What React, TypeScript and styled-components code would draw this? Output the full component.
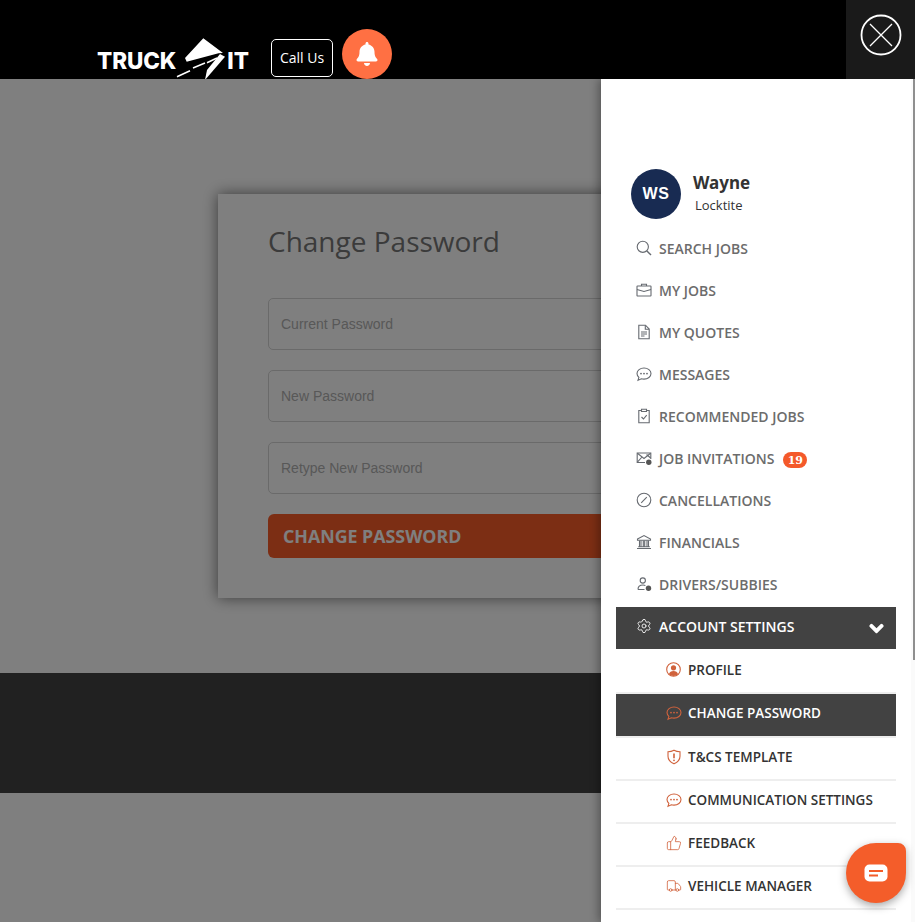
import React from "react";
import styled, { createGlobalStyle } from "styled-components";
import { Settings, ThumbsUp, Truck } from "lucide-react";
import { FaBell, FaChevronDown } from "react-icons/fa";

const Global = createGlobalStyle`
  html, body { margin: 0; padding: 0; height: 100%; overflow: hidden; background: #fff; }
  body { font-family: "Open Sans", "Noto Sans", sans-serif; }
  * { box-sizing: border-box; }
`;

const Page = styled.div`
  position: relative;
  width: 915px;
  height: 922px;
  overflow: hidden;
`;

const Header = styled.header`
  position: relative;
  z-index: 5;
  height: 79px;
  background: #000;
  display: flex;
  align-items: flex-end;
  padding-left: 97px;
`;

const Logo = styled.div`
  display: flex;
  align-items: flex-start;
  width: 151px;
  height: 43px;
  color: #fff;
  font-family: "Inter", sans-serif;
  font-weight: 800;
  font-size: 22.5px;
  line-height: 28px;
  white-space: nowrap;
`;

const LogoWord = styled.span`
  padding-top: 11px;
  letter-spacing: -0.1px;
`;

const LogoMark = styled.svg`
  flex: none;
  margin: 0 0 0 -1px;
`;

const CallUs = styled.button`
  width: 62px;
  height: 38px;
  margin: 0 9px 2px 23px;
  padding: 0 0 2px;
  background: #000;
  color: #fff;
  border: 1px solid #fff;
  border-radius: 5px;
  font-family: "Open Sans", sans-serif;
  font-size: 14px;
`;

const BellButton = styled.div`
  width: 50px;
  height: 50px;
  border-radius: 50%;
  background: #ff7043;
  color: #fff;
  display: flex;
  align-items: center;
  justify-content: center;
`;

const CloseTile = styled.div`
  margin-left: auto;
  width: 69px;
  height: 79px;
  background: #1a1a1a;
  display: flex;
  justify-content: center;
  padding-top: 14px;
`;

const Main = styled.main`
  height: 594px;
  padding: 115px 0 0 218px;
  background: #fff;
`;

const Card = styled.section`
  width: 479px;
  height: 404px;
  padding: 28px 50px 0;
  background: #fff;
  box-shadow: 0 0 14px rgba(0, 0, 0, 0.55);
`;

const Title = styled.h1`
  margin: 0 0 37px;
  height: 39px;
  font-size: 28px;
  line-height: 39px;
  font-weight: 400;
  color: #767676;
`;

const Field = styled.input`
  display: block;
  width: 100%;
  height: 52px;
  margin-bottom: 20px;
  padding: 0 12px;
  border: 1px solid #d4d4d4;
  border-radius: 5px;
  background: #fff;
  font-family: "Liberation Sans", Arial, sans-serif;
  font-size: 14px;
  &::placeholder {
    color: #b0b0b0;
    opacity: 1;
  }
`;

const Submit = styled.button`
  display: block;
  width: 100%;
  height: 44px;
  padding: 0 15px;
  border: 0;
  border-radius: 6px;
  background: #f95c29;
  color: #fff;
  text-align: left;
  font-family: "Open Sans", sans-serif;
  font-weight: 700;
  font-size: 17.8px;
`;

const Footer = styled.footer`
  height: 120px;
  background: #424242;
`;

const Scrim = styled.div`
  position: absolute;
  left: 0;
  right: 0;
  top: 79px;
  bottom: 0;
  background: rgba(0, 0, 0, 0.5);
  z-index: 2;
`;

const Drawer = styled.aside`
  position: absolute;
  z-index: 3;
  top: 79px;
  right: 0;
  bottom: 0;
  width: 314px;
  padding: 90px 19px 0 15px;
  background: #fff;
  box-shadow: -3px 0 8px rgba(0, 0, 0, 0.3);
  overflow: hidden;
`;

const ScrollTrack = styled.div`
  position: absolute;
  top: 0;
  right: 0;
  bottom: 0;
  width: 4px;
  background: #fafafa;
`;

const ScrollThumb = styled.div`
  margin-left: 2px;
  width: 2px;
  height: 581px;
  background: #8f8f8f;
`;

const Profile = styled.div`
  display: flex;
  align-items: flex-start;
  height: 60px;
  padding-left: 15px;
`;

const Avatar = styled.div`
  width: 50px;
  height: 50px;
  flex: none;
  border-radius: 50%;
  background: #182b52;
  color: #fff;
  display: flex;
  align-items: center;
  justify-content: center;
  font-family: "Liberation Sans", Arial, sans-serif;
  font-weight: 700;
  font-size: 16px;
  letter-spacing: 0.5px;
`;

const ProfileText = styled.div`
  margin-left: 12px;
  display: flex;
  flex-direction: column;
`;

const ProfileName = styled.div`
  font-family: "Noto Sans", sans-serif;
  font-weight: 700;
  font-size: 17px;
  line-height: 28px;
  color: #333;
`;

const ProfileCompany = styled.div`
  margin: 0 0 0 2px;
  font-size: 13px;
  line-height: 16px;
  color: #333;
`;

const NavRow = styled.div<{ $active?: boolean }>`
  display: flex;
  align-items: center;
  height: 42px;
  padding: 0 12px 4px 20px;
  gap: 7px;
  background: ${(p) => (p.$active ? "#424242" : "transparent")};
  color: ${(p) => (p.$active ? "#fff" : "#6c6c6c")};
  font-size: 14px;
  font-weight: 600;
`;

const NavIcon = styled.span`
  width: 16px;
  height: 16px;
  flex: none;
  display: flex;
  align-items: center;
  justify-content: center;
  color: #666a70;
`;

const Badge = styled.span`
  margin: 4px 0 0 2px;
  width: 24px;
  height: 16px;
  border-radius: 8px;
  background: #f4592a;
  color: #fff;
  display: flex;
  align-items: center;
  justify-content: center;
  font-family: "DejaVu Serif", "Liberation Serif", serif;
  font-weight: 700;
  font-size: 11px;
`;

const Chevron = styled.span`
  margin: 4px 0 0 auto;
  display: flex;
`;

const SubList = styled.div`
  margin-top: 2px;
`;

const SubRow = styled.div<{ $active?: boolean }>`
  display: flex;
  align-items: center;
  height: ${(p) => (p.$active ? "44px" : "43px")};
  padding: 0 0 ${(p) => (p.$active ? "5px" : "4px")} 50px;
  gap: 7px;
  border-bottom: 2px solid #eee;
  background: ${(p) => (p.$active ? "#424242" : "transparent")};
  background-clip: padding-box;
  color: ${(p) => (p.$active ? "#fff" : "#333")};
  font-size: 13.5px;
  font-weight: 600;
`;

const SubIcon = styled.span`
  width: 15px;
  height: 16px;
  flex: none;
  display: flex;
  align-items: center;
  justify-content: center;
  color: #d0623c;
  & > svg {
    flex: none;
  }
`;

const ChatBubble = styled.div`
  position: absolute;
  z-index: 6;
  left: 846px;
  top: 843px;
  width: 60px;
  height: 60px;
  background: #f45d2a;
  border-radius: 50% 8px 50% 50%;
  box-shadow: 0 3px 8px rgba(0, 0, 0, 0.35);
  display: flex;
  align-items: center;
  justify-content: center;
`;

type GlyphProps = { children: React.ReactNode };
const Glyph = ({ children }: GlyphProps) => (
  <svg width="16" height="16" viewBox="0 0 16 16" fill="none" stroke="currentColor" strokeWidth="1.1">
    {children}
  </svg>
);

const SearchGlyph = () => (
  <Glyph>
    <circle cx="6.8" cy="6.8" r="5.6" />
    <path d="M10.9 10.9 15 15" strokeWidth="1.4" />
  </Glyph>
);

const CaseGlyph = () => (
  <Glyph>
    <rect x="1" y="4" width="14" height="10" rx="0.6" />
    <path d="M5.5 4V2.300h5V4M1 7.500l7 2 7-2" />
  </Glyph>
);

const DocGlyph = () => (
  <Glyph>
    <path d="M2.800 1.200h6.700l3.700 3.800v9.800H2.800z" />
    <path d="M9.300 1.400V5.200h3.700M5 8h6M5 10h6M5 12h3.500" />
  </Glyph>
);

const ChatGlyph = () => (
  <Glyph>
    <path d="M8 2C4.100 2 1 4.400 1 7.500c0 1.500.7 2.800 1.900 3.800L2 14.200l3.400-1.400c.8.200 1.700.3 2.600.3 3.900 0 7-2.500 7-5.600S11.900 2 8 2z" />
    <circle cx="5" cy="7.600" r="0.9" fill="currentColor" stroke="none" />
    <circle cx="8" cy="7.600" r="0.9" fill="currentColor" stroke="none" />
    <circle cx="11" cy="7.600" r="0.9" fill="currentColor" stroke="none" />
  </Glyph>
);

const ClipGlyph = () => (
  <Glyph>
    <path d="M5.500 2.500H2.800v12.300h10.400V2.500h-2.700" />
    <path d="M5.500 1.200h5v2.300h-5zM5.500 9l2 2 3.200-3.800" />
  </Glyph>
);

const MailGlyph = () => (
  <Glyph>
    <path d="M9 12.500H1.200V3h13.600v6" />
    <path d="M1.400 3.300 8 8.500l6.600-5.200M1.400 12.200 6 7M14.600 8l-4-3.500" />
    <circle cx="12.800" cy="12.200" r="2.700" fill="#555" stroke="none" />
  </Glyph>
);

const SlashGlyph = () => (
  <Glyph>
    <circle cx="8" cy="8" r="6.800" />
    <path d="M5.200 10.800 10.800 5.200" />
  </Glyph>
);

const BankGlyph = () => (
  <Glyph>
    <path d="M1.500 5 8 1.500 14.500 5v1.300h-13z" />
    <path d="M3.500 6.500v6M5 6.500v6M7.300 6.500v6M8.700 6.500v6M11 6.500v6M12.500 6.500v6M2.200 12.800h11.600M1 14.500h14" />
  </Glyph>
);

const UserGlyph = () => (
  <Glyph>
    <circle cx="6.800" cy="4.500" r="2.600" />
    <path d="M2 13.500c0-3 2-4.500 5-4.500 1 0 1.800.2 2.400.5M2 13.500h6.500" />
    <circle cx="12.500" cy="12.200" r="2.700" fill="#555" stroke="none" />
  </Glyph>
);

const ShieldGlyph = () => (
  <Glyph>
    <path d="M8 1.200c1.800 1 3.700 1.500 6 1.500v4.500c0 3.500-2.500 6-6 7.600-3.500-1.600-6-4.100-6-7.600V2.700c2.300 0 4.200-.5 6-1.500z" />
    <path d="M8 4.500v4.800" strokeWidth="1.600" />
    <circle cx="8" cy="11.300" r="0.900" fill="currentColor" stroke="none" />
  </Glyph>
);

const ProfileGlyph = () => (
  <svg width="15" height="15" viewBox="0 0 15 15">
    <circle cx="7.500" cy="7.500" r="6.800" fill="none" stroke="currentColor" strokeWidth="1.100" />
    <circle cx="7.500" cy="5.800" r="2.600" fill="currentColor" />
    <path d="M2.900 12.300c.6-2.400 2.400-3.400 4.600-3.400s4 1 4.600 3.400a6.800 6.800 0 0 1-9.200 0z" fill="currentColor" />
  </svg>
);

const mainItems: { label: string; icon: React.ReactNode; badge?: string }[] = [
  { label: "SEARCH JOBS", icon: <SearchGlyph /> },
  { label: "MY JOBS", icon: <CaseGlyph /> },
  { label: "MY QUOTES", icon: <DocGlyph /> },
  { label: "MESSAGES", icon: <ChatGlyph /> },
  { label: "RECOMMENDED JOBS", icon: <ClipGlyph /> },
  { label: "JOB INVITATIONS", icon: <MailGlyph />, badge: "19" },
  { label: "CANCELLATIONS", icon: <SlashGlyph /> },
  { label: "FINANCIALS", icon: <BankGlyph /> },
  { label: "DRIVERS/SUBBIES", icon: <UserGlyph /> },
];

const subItems: { label: string; icon: React.ReactNode; active?: boolean }[] = [
  { label: "PROFILE", icon: <ProfileGlyph /> },
  { label: "CHANGE PASSWORD", icon: <ChatGlyph />, active: true },
  { label: "T&CS TEMPLATE", icon: <ShieldGlyph /> },
  { label: "COMMUNICATION SETTINGS", icon: <ChatGlyph /> },
  { label: "FEEDBACK", icon: <ThumbsUp size={16} strokeWidth={1.2} /> },
  { label: "VEHICLE MANAGER", icon: <Truck size={16} strokeWidth={1.2} /> },
];

export default function App() {
  return (
    <Page>
      <Global />
      <Header>
        <Logo>
          <LogoWord>TRUCK</LogoWord>
          <LogoMark width="52" height="43" viewBox="0 0 52 43" fill="#fff">
            <path d="M10 22 28.300 2.300 48 17l-4.500.3L11.700 25.700z" />
            <path d="M45 18l5 2.700L30 44l2-10z" />
            <path d="M2 40.700 15 34.700M18 32l12-5M32 26.700l10-4.700" stroke="#fff" strokeWidth="1.500" fill="none" />
          </LogoMark>
          <LogoWord>IT</LogoWord>
        </Logo>
        <CallUs>Call Us</CallUs>
        <BellButton>
          <FaBell size={24} />
        </BellButton>
        <CloseTile>
          <svg width="42" height="42" viewBox="0 0 42 42" fill="none" stroke="#fff">
            <circle cx="21" cy="21" r="19.500" strokeWidth="1.800" />
            <path d="M10 10 32 32M32 10 10 32" strokeWidth="1.300" />
          </svg>
        </CloseTile>
      </Header>
      <Main>
        <Card>
          <Title>Change Password</Title>
          <Field placeholder="Current Password" />
          <Field placeholder="New Password" />
          <Field placeholder="Retype New Password" />
          <Submit>CHANGE PASSWORD</Submit>
        </Card>
      </Main>
      <Footer />
      <Scrim />
      <Drawer>
        <Profile>
          <Avatar>WS</Avatar>
          <ProfileText>
            <ProfileName>Wayne</ProfileName>
            <ProfileCompany>Locktite</ProfileCompany>
          </ProfileText>
        </Profile>
        {mainItems.map((item) => (
          <NavRow key={item.label}>
            <NavIcon>{item.icon}</NavIcon>
            {item.label}
            {item.badge && <Badge>{item.badge}</Badge>}
          </NavRow>
        ))}
        <NavRow $active>
          <NavIcon>
            <Settings size={16} strokeWidth={1.3} color="#fff" />
          </NavIcon>
          ACCOUNT SETTINGS
          <Chevron>
            <FaChevronDown size={15} color="#fff" stroke="#fff" strokeWidth={50} />
          </Chevron>
        </NavRow>
        <SubList>
          {subItems.map((item) => (
            <SubRow key={item.label} $active={item.active}>
              <SubIcon>{item.icon}</SubIcon>
              {item.label}
            </SubRow>
          ))}
        </SubList>
        <ScrollTrack>
          <ScrollThumb />
        </ScrollTrack>
      </Drawer>
      <ChatBubble>
        <svg width="24" height="18" viewBox="0 0 24 18">
          <rect x="0.500" y="0.500" width="23" height="17" rx="5" fill="#fff" />
          <path d="M5 7h14M5 11.500h9" stroke="#f45d2a" strokeWidth="1.800" />
        </svg>
      </ChatBubble>
    </Page>
  );
}
